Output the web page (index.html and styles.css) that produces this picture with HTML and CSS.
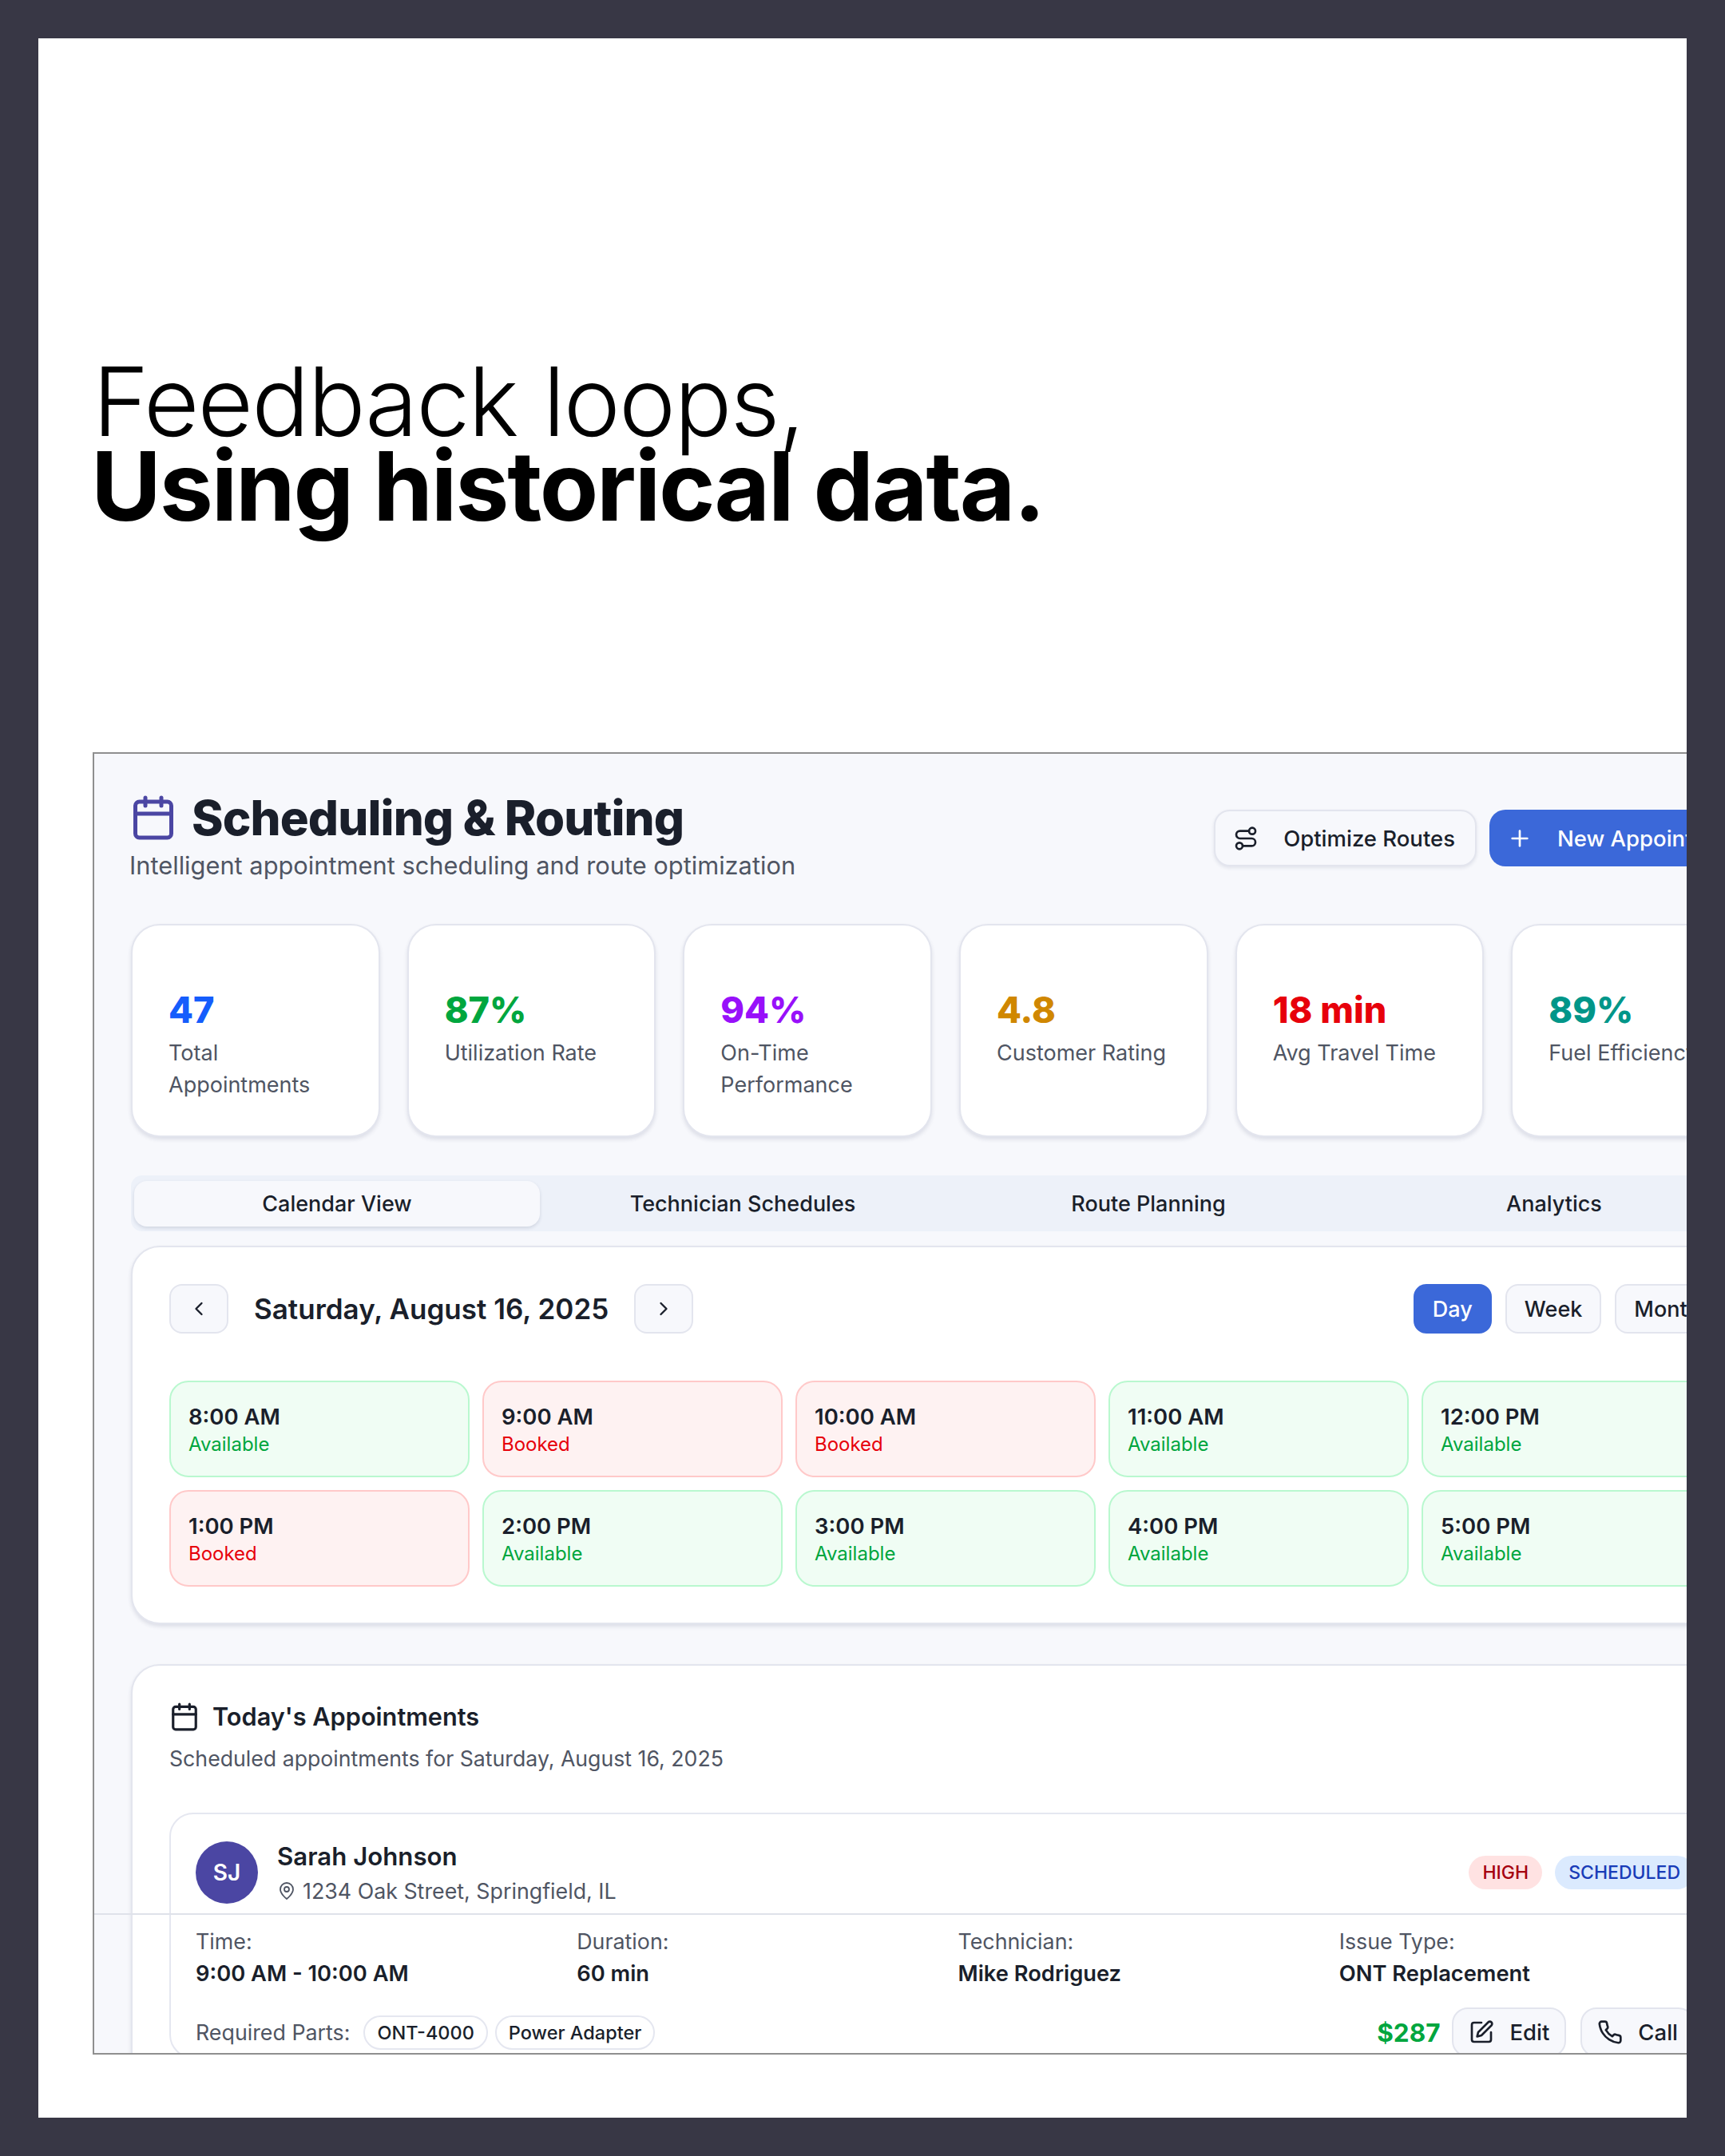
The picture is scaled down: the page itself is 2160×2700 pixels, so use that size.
FILE: index.html
```html
<!DOCTYPE html>
<html lang="en">
<head>
  <meta charset="UTF-8" />
  <title>Feedback loops</title>
  <link rel="stylesheet" href="styles.css">
</head>
<body>
  <div class="slide">
    <h1 class="headline">
      <span class="headline-light">Feedback loops,</span>
      <span class="headline-bold">Using historical data.</span>
    </h1>

    <div class="panel">
      <div class="panel-inner">
        <header class="page-head">
          <div>
            <div class="page-title">
              <svg class="icon icon-title" viewBox="0 0 24 24"><path d="M8 2v4"/><path d="M16 2v4"/><rect width="18" height="18" x="3" y="4" rx="2"/><path d="M3 10h18"/></svg>
              <h2>Scheduling &amp; Routing</h2>
            </div>
            <p class="page-sub">Intelligent appointment scheduling and route optimization</p>
          </div>
          <div class="page-actions">
            <button class="btn btn-outline">
              <svg class="icon" viewBox="0 0 24 24"><circle cx="6" cy="19" r="3"/><path d="M9 19h8.5a3.5 3.5 0 0 0 0-7h-11a3.5 3.5 0 0 1 0-7H15"/><circle cx="18" cy="5" r="3"/></svg>
              Optimize Routes
            </button>
            <button class="btn btn-primary">
              <svg class="icon" viewBox="0 0 24 24"><path d="M5 12h14"/><path d="M12 5v14"/></svg>
              New Appointment
            </button>
          </div>
        </header>

        <section class="stats">
          <div class="stat"><div class="stat-value blue">47</div><div class="stat-label">Total Appointments</div></div>
          <div class="stat"><div class="stat-value green">87%</div><div class="stat-label">Utilization Rate</div></div>
          <div class="stat"><div class="stat-value purple">94%</div><div class="stat-label">On-Time Performance</div></div>
          <div class="stat"><div class="stat-value amber">4.8</div><div class="stat-label">Customer Rating</div></div>
          <div class="stat"><div class="stat-value red">18 min</div><div class="stat-label">Avg Travel Time</div></div>
          <div class="stat"><div class="stat-value teal">89%</div><div class="stat-label">Fuel Efficiency</div></div>
        </section>

        <nav class="tabs">
          <button class="tab active">Calendar View</button>
          <button class="tab">Technician Schedules</button>
          <button class="tab">Route Planning</button>
          <button class="tab">Analytics</button>
        </nav>

        <section class="card calendar">
          <div class="cal-controls">
            <div class="cal-nav">
              <button class="btn-square"><svg class="icon icon-sm" viewBox="0 0 24 24"><path d="m15 18-6-6 6-6"/></svg></button>
              <div class="cal-date">Saturday, August 16, 2025</div>
              <button class="btn-square"><svg class="icon icon-sm" viewBox="0 0 24 24"><path d="m9 18 6-6-6-6"/></svg></button>
            </div>
            <div class="cal-range">
              <button class="range range-active">Day</button>
              <button class="range">Week</button>
              <button class="range">Month</button>
            </div>
          </div>
          <div class="slots">
            <div class="slot free"><div class="slot-time">8:00 AM</div><div class="slot-state">Available</div></div>
            <div class="slot booked"><div class="slot-time">9:00 AM</div><div class="slot-state">Booked</div></div>
            <div class="slot booked"><div class="slot-time">10:00 AM</div><div class="slot-state">Booked</div></div>
            <div class="slot free"><div class="slot-time">11:00 AM</div><div class="slot-state">Available</div></div>
            <div class="slot free"><div class="slot-time">12:00 PM</div><div class="slot-state">Available</div></div>
            <div class="slot booked"><div class="slot-time">1:00 PM</div><div class="slot-state">Booked</div></div>
            <div class="slot free"><div class="slot-time">2:00 PM</div><div class="slot-state">Available</div></div>
            <div class="slot free"><div class="slot-time">3:00 PM</div><div class="slot-state">Available</div></div>
            <div class="slot free"><div class="slot-time">4:00 PM</div><div class="slot-state">Available</div></div>
            <div class="slot free"><div class="slot-time">5:00 PM</div><div class="slot-state">Available</div></div>
          </div>
        </section>

        <section class="card appts">
          <div class="appts-title">
            <svg class="icon icon-heading" viewBox="0 0 24 24"><path d="M8 2v4"/><path d="M16 2v4"/><rect width="18" height="18" x="3" y="4" rx="2"/><path d="M3 10h18"/></svg>
            <h3>Today's Appointments</h3>
          </div>
          <p class="appts-sub">Scheduled appointments for Saturday, August 16, 2025</p>

          <article class="appt">
            <div class="appt-head">
              <div class="avatar">SJ</div>
              <div class="appt-who">
                <div class="appt-name">Sarah Johnson</div>
                <div class="appt-addr">
                  <svg class="icon icon-pin" viewBox="0 0 24 24"><path d="M20 10c0 6-8 12-8 12s-8-6-8-12a8 8 0 0 1 16 0Z"/><circle cx="12" cy="10" r="3"/></svg>
                  1234 Oak Street, Springfield, IL
                </div>
              </div>
              <div class="badges">
                <span class="badge badge-high">HIGH</span>
                <span class="badge badge-sched">SCHEDULED</span>
              </div>
            </div>

            <div class="appt-grid">
              <div><div class="field-label">Time:</div><div class="field-value">9:00 AM - 10:00 AM</div></div>
              <div><div class="field-label">Duration:</div><div class="field-value">60 min</div></div>
              <div><div class="field-label">Technician:</div><div class="field-value">Mike Rodriguez</div></div>
              <div><div class="field-label">Issue Type:</div><div class="field-value">ONT Replacement</div></div>
            </div>

            <div class="appt-foot">
              <div class="parts">
                <span class="field-label">Required Parts:</span>
                <span class="chip">ONT-4000</span>
                <span class="chip">Power Adapter</span>
              </div>
              <div class="appt-actions">
                <span class="price">$287</span>
                <button class="btn-small">
                  <svg class="icon icon-action" viewBox="0 0 24 24"><path d="M12 3H5a2 2 0 0 0-2 2v14a2 2 0 0 0 2 2h14a2 2 0 0 0 2-2v-7"/><path d="M18.375 2.625a2.121 2.121 0 1 1 3 3L12 15l-4 1 1-4Z"/></svg>
                  Edit
                </button>
                <button class="btn-small">
                  <svg class="icon icon-action" viewBox="0 0 24 24"><path d="M22 16.92v3a2 2 0 0 1-2.18 2 19.79 19.79 0 0 1-8.63-3.07 19.5 19.5 0 0 1-6-6 19.79 19.79 0 0 1-3.07-8.67A2 2 0 0 1 4.11 2h3a2 2 0 0 1 2 1.72 12.84 12.84 0 0 0 .7 2.81 2 2 0 0 1-.45 2.11L8.09 9.91a16 16 0 0 0 6 6l1.27-1.27a2 2 0 0 1 2.11-.45 12.84 12.84 0 0 0 2.81.7A2 2 0 0 1 22 16.92z"/></svg>
                  Call
                </button>
              </div>
            </div>
          </article>
        </section>
      </div>
      <div class="seam"></div>
    </div>
  </div>
</body>
</html>
```

FILE: styles.css
```css
html, body {
  margin: 0;
  height: 100%;
  overflow: hidden;
}

body {
  background-color: #383745;
  font-family: Inter, "Liberation Sans", sans-serif;
  color: #1a1f2b;
}

button {
  font-family: inherit;
  cursor: pointer;
}

.slide {
  margin: 48px;
  width: 2064px;
  height: 2604px;
  background-color: #fff;
  overflow: hidden;
}

.headline {
  margin: 0;
  padding: 402px 0 0 68px;
  font-size: 120px;
  line-height: 106px;
  color: #000;
  font-weight: 300;
}

.headline span {
  display: block;
}

.headline-light {
  font-weight: 300;
  letter-spacing: -1.9px;
}

.headline-bold {
  margin-left: -2px;
  font-weight: 700;
  letter-spacing: -2.2px;
}

.panel {
  position: relative;
  box-sizing: border-box;
  width: 1996px;
  height: 1631px;
  margin: 280px 0 0 68px;
  border: 2px solid #8f8f8f;
  border-right: none;
  background-color: #f7f8fc;
  overflow: hidden;
}

.panel-inner {
  width: 2040px;
  padding-left: 46px;
}

.seam {
  position: absolute;
  left: 0;
  right: 0;
  top: 1452px;
  height: 2px;
  background-color: #dfe2ea;
}

.icon {
  width: 32px;
  height: 32px;
  fill: none;
  stroke: currentColor;
  stroke-width: 2;
  stroke-linecap: round;
  stroke-linejoin: round;
  flex-shrink: 0;
}

/* page header */
.page-head {
  display: flex;
  justify-content: space-between;
  margin-left: -2px;
  padding-top: 44px;
}

.page-title {
  display: flex;
  align-items: center;
  gap: 18px;
}

.page-title h2 {
  margin: 0;
  font-size: 60px;
  line-height: 72px;
  font-weight: 800;
  letter-spacing: -0.9px;
}

.icon-title {
  width: 60px;
  height: 60px;
  color: #4b46a3;
}

.page-sub {
  margin: 0;
  font-size: 30.8px;
  line-height: 47px;
  color: #4f5563;
}

.page-actions {
  display: flex;
  align-items: flex-start;
  gap: 16px;
  margin-right: -7px;
  padding-top: 26px;
}

.btn {
  display: flex;
  align-items: center;
  gap: 31px;
  box-sizing: border-box;
  height: 71px;
  padding: 0 25px 0 22px;
  border-radius: 20px;
  font-size: 27.5px;
  font-weight: 500;
  white-space: nowrap;
}

.btn-outline {
  background-color: #f7f8fc;
  border: 2px solid #e3e5ee;
  color: #1a1f2b;
  box-shadow: 0 2px 4px rgba(30, 40, 80, 0.1);
}

.btn-primary {
  background-color: #3b68d9;
  border: none;
  color: #fff;
}

/* stat cards */
.stats {
  display: grid;
  grid-template-columns: repeat(6, 1fr);
  gap: 34px;
  margin-top: 50px;
}

.stat {
  box-sizing: border-box;
  height: 267px;
  padding: 76px 30px 0 45px;
  background-color: #fff;
  border: 2px solid #e3e5ee;
  border-radius: 36px;
  box-shadow: 0 3px 5px rgba(30, 40, 80, 0.12);
}

.stat-value {
  font-size: 45px;
  line-height: 60px;
  font-weight: 800;
}

.stat-label {
  margin-top: 4px;
  font-size: 27px;
  line-height: 40px;
  color: #4f5563;
}

.blue { color: #155dfc; }
.green { color: #00a63e; }
.purple { color: #9810fa; }
.amber { color: #d08700; }
.red { color: #e7000b; }
.teal { color: #009689; }

/* tabs */
.tabs {
  display: grid;
  grid-template-columns: repeat(4, 1fr);
  box-sizing: border-box;
  height: 70px;
  margin-top: 48px;
  padding: 7px 4px 6px;
  background-color: #edf1f9;
  border-radius: 14px;
}

.tab {
  border: none;
  background: none;
  border-radius: 16px;
  font-size: 27px;
  font-weight: 500;
  color: #1a1f2b;
}

.tab.active {
  background-color: #f7f8fc;
  box-shadow: 0 2px 4px rgba(30, 40, 80, 0.14);
}

/* cards */
.card {
  box-sizing: border-box;
  background-color: #fff;
  border: 2px solid #e3e5ee;
  border-radius: 36px;
  box-shadow: 0 3px 5px rgba(30, 40, 80, 0.12);
}

.calendar {
  height: 474px;
  margin-top: 18px;
  padding: 46px 46px 0;
}

.cal-controls {
  display: flex;
  justify-content: space-between;
  align-items: center;
  height: 62px;
}

.cal-nav {
  display: flex;
  align-items: center;
  gap: 32px;
}

.btn-square {
  display: flex;
  align-items: center;
  justify-content: center;
  box-sizing: border-box;
  width: 74px;
  height: 62px;
  padding: 0;
  background-color: #f7f8fc;
  border: 2px solid #e3e5ee;
  border-radius: 16px;
  color: #1a1f2b;
}

.icon-sm {
  width: 28px;
  height: 28px;
}

.cal-date {
  font-size: 35px;
  font-weight: 600;
}

.cal-range {
  display: flex;
  gap: 17px;
  margin-right: 3px;
}

.range {
  box-sizing: border-box;
  height: 62px;
  padding: 0 22px;
  background-color: #f7f8fc;
  border: 2px solid #e3e5ee;
  border-radius: 16px;
  font-size: 27px;
  font-weight: 500;
  color: #1a1f2b;
}

.range-active {
  background-color: #3b68d9;
  border-color: #3b68d9;
  color: #fff;
}

.slots {
  display: grid;
  grid-template-columns: repeat(5, 1fr);
  gap: 16px;
  margin-top: 59px;
}

.slot {
  box-sizing: border-box;
  height: 121px;
  padding: 24px 22px 0;
  border: 2px solid;
  border-radius: 24px;
}

.slot.free {
  background-color: #f0fdf4;
  border-color: #b9f8cf;
  color: #00a63e;
}

.slot.booked {
  background-color: #fef2f2;
  border-color: #ffc9c9;
  color: #e7000b;
}

.slot-time {
  font-size: 27.5px;
  line-height: 38px;
  font-weight: 600;
  color: #1a1f2b;
}

.slot-state {
  font-size: 24px;
  line-height: 32px;
}

/* appointments */
.appts {
  height: 800px;
  margin-top: 50px;
  padding: 42px 46px 0;
}

.appts-title {
  display: flex;
  align-items: center;
  gap: 16px;
}

.appts-title h3 {
  margin: 0;
  font-size: 30.7px;
  line-height: 44px;
  font-weight: 600;
}

.icon-heading {
  width: 38px;
  height: 38px;
}

.appts-sub {
  margin: 10px 0 0;
  font-size: 26.7px;
  line-height: 40px;
  color: #4f5563;
}

.appt {
  margin-top: 48px;
  padding: 34px 32px 0 31px;
  border: 2px solid #e5e7f0;
  border-radius: 30px;
}

.appt-head {
  display: flex;
  align-items: center;
  gap: 24px;
  height: 78px;
}

.avatar {
  display: flex;
  align-items: center;
  justify-content: center;
  width: 78px;
  height: 78px;
  border-radius: 50%;
  background-color: #4b46a3;
  color: #fff;
  font-size: 28px;
  font-weight: 600;
}

.appt-who {
  flex: 1;
  padding-top: 2px;
}

.appt-name {
  font-size: 31.2px;
  line-height: 40px;
  font-weight: 600;
}

.appt-addr {
  display: flex;
  align-items: center;
  gap: 8px;
  margin-top: 4px;
  font-size: 26.8px;
  line-height: 38px;
  color: #4f5563;
}

.icon-pin {
  width: 24px;
  height: 24px;
  stroke-width: 1.8;
}

.badges {
  display: flex;
  gap: 16px;
  margin-right: 1px;
}

.badge {
  padding: 0 17px;
  height: 42px;
  border-radius: 21px;
  font-size: 23px;
  line-height: 42px;
  font-weight: 500;
}

.badge-high {
  background-color: #ffe2e2;
  color: #a5000f;
}

.badge-sched {
  background-color: #dbeafe;
  color: #193cb8;
}

.appt-grid {
  display: grid;
  grid-template-columns: repeat(4, 1fr);
  gap: 32px;
  margin-top: 28px;
}

.field-label {
  font-size: 26.8px;
  line-height: 38px;
  color: #4f5563;
}

.field-value {
  margin-top: 3px;
  font-size: 27.3px;
  line-height: 38px;
  font-weight: 600;
}

.appt-foot {
  display: flex;
  justify-content: space-between;
  align-items: center;
  margin-top: 23px;
}

.parts {
  display: flex;
  align-items: center;
  gap: 9px;
}

.parts .field-label {
  margin-right: 8px;
}

.chip {
  box-sizing: border-box;
  height: 43px;
  padding: 0 15px;
  border: 2px solid #e5e7f0;
  border-radius: 22px;
  font-size: 23.5px;
  line-height: 39px;
  font-weight: 500;
}

.appt-actions {
  display: flex;
  align-items: center;
  gap: 18px;
}

.price {
  margin-right: -3px;
  font-size: 31.5px;
  font-weight: 700;
  color: #00a63e;
}

.btn-small {
  display: flex;
  align-items: center;
  gap: 19px;
  box-sizing: border-box;
  height: 62px;
  padding: 0 19px;
  background-color: #f7f8fc;
  border: 2px solid #e3e5ee;
  border-radius: 20px;
  font-size: 27.5px;
  font-weight: 500;
  color: #1a1f2b;
}

.icon-action {
  width: 32px;
  height: 32px;
}
```
